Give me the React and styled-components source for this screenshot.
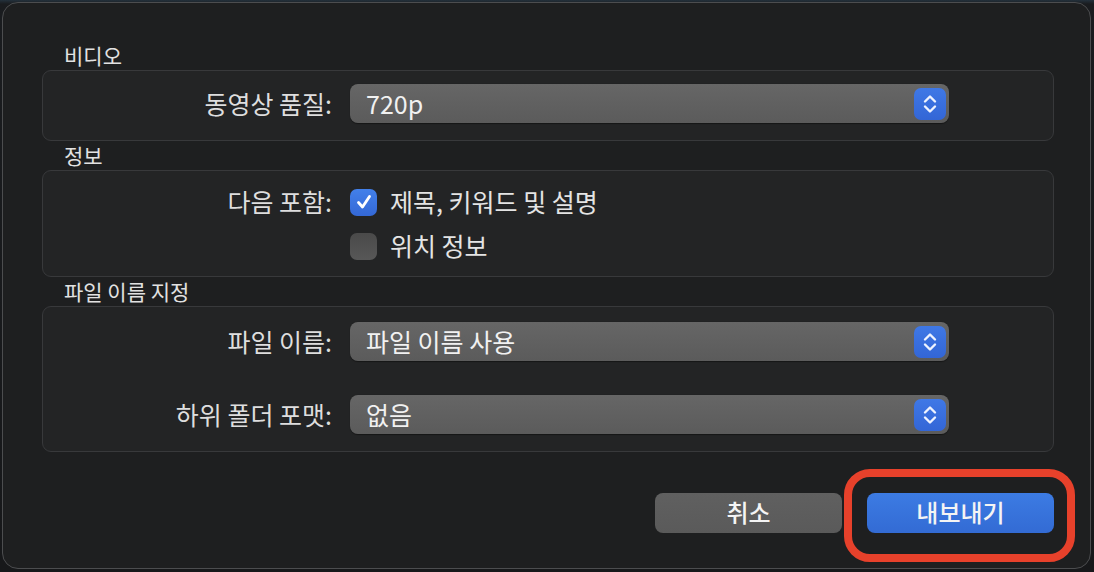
import React from "react";
import styled, { createGlobalStyle } from "styled-components";

const Global = createGlobalStyle`
  html, body { margin: 0; padding: 0; }
  body {
    width: 1094px;
    height: 572px;
    overflow: hidden;
    background: linear-gradient(180deg, #24313c 0px, #1a1c1f 4px, #17181a 100%);
    font-family: "Noto Sans CJK KR", "Noto Sans", sans-serif;
    -webkit-font-smoothing: antialiased;
  }
`;

const Window = styled.div`
  box-sizing: border-box;
  margin: 2px 0 0 2px;
  width: 1089px;
  height: 567px;
  border: 1px solid #4c4d4f;
  border-radius: 16px;
  background: #1e1f20;
  padding: 38px 0 0 39px;
  display: flex;
  flex-direction: column;
`;

const Heading = styled.div`
  height: 29px;
  line-height: 29px;
  padding-left: 22px;
  font-size: 21px;
  color: #e2e2e2;
`;

const Box = styled.div`
  box-sizing: border-box;
  width: 1012px;
  border: 1px solid #38393b;
  border-radius: 9px;
  background: #232425;
  padding: ${(p) => p.$pad};
  display: flex;
  flex-direction: column;
  gap: ${(p) => p.$gap || "0px"};
`;

const Row = styled.div`
  display: grid;
  grid-template-columns: 289px 599px;
  column-gap: 18px;
  align-items: center;
  height: ${(p) => p.$h || "39px"};
`;

const Label = styled.div`
  text-align: right;
  font-size: 25px;
  line-height: 30px;
  padding-bottom: 2px;
  color: #dedede;
  white-space: nowrap;
`;

const Popup = styled.div`
  box-sizing: border-box;
  height: 39px;
  border-radius: 8px;
  background: linear-gradient(180deg, #666666 0%, #5b5b5b 100%);
  box-shadow: 0 0.5px 1px rgba(0, 0, 0, 0.4);
  display: flex;
  align-items: center;
  justify-content: space-between;
  padding: 0 3px 0 16px;
  font-size: 25px;
  line-height: 30px;
  color: #f1f1f1;
`;

const PopupValue = styled.span`
  padding-bottom: 2px;
`;

const Stepper = styled.div`
  width: 32px;
  height: 32px;
  border-radius: 7px;
  background: linear-gradient(180deg, #3f78e6 0%, #3366d6 100%);
  display: flex;
  align-items: center;
  justify-content: center;
`;

const CheckLine = styled.div`
  display: flex;
  align-items: center;
  gap: 13px;
  font-size: 25px;
  line-height: 30px;
  color: #e4e4e4;
`;

const CheckText = styled.span`
  padding-bottom: 2px;
`;

const Check = styled.div`
  box-sizing: border-box;
  width: 27px;
  height: 27px;
  border-radius: 7px;
  background: ${(p) =>
    p.$on
      ? "linear-gradient(180deg, #4280ea 0%, #3468d6 100%)"
      : "linear-gradient(180deg, #4a4a4a 0%, #575757 100%)"};
  display: flex;
  align-items: center;
  justify-content: center;
`;

const Footer = styled.div`
  width: 1012px;
  display: flex;
  justify-content: flex-end;
  gap: 25px;
  margin-top: 41px;
`;

const Button = styled.div`
  position: relative;
  box-sizing: border-box;
  width: 187px;
  height: 40px;
  padding-bottom: 2px;
  border-radius: 8px;
  display: flex;
  align-items: center;
  justify-content: center;
  font-size: 24px;
  line-height: 30px;
  font-weight: 500;
  color: #f4f4f4;
  background: ${(p) =>
    p.$primary
      ? "linear-gradient(180deg, #3c7be3 0%, #336bd4 100%)"
      : "linear-gradient(180deg, #606060 0%, #5a5a5a 100%)"};
  ${(p) =>
    p.$highlight &&
    `
    &::after {
      content: "";
      position: absolute;
      left: -23px;
      right: -21px;
      top: -24px;
      bottom: -29px;
      border: 8px solid #e7412b;
      border-radius: 26px;
      pointer-events: none;
    }
  `}
`;

const Chevrons = () => (
  <svg width="18" height="24" viewBox="0 0 18 24" fill="none">
    <path d="M4 9.5 L9 4.5 L14 9.5" stroke="#eef3ff" strokeWidth="2.4" strokeLinecap="round" strokeLinejoin="round" />
    <path d="M4 14.5 L9 19.5 L14 14.5" stroke="#eef3ff" strokeWidth="2.4" strokeLinecap="round" strokeLinejoin="round" />
  </svg>
);

const Tick = () => (
  <svg width="20" height="20" viewBox="0 0 20 20" fill="none">
    <path d="M4.5 10.5 L8.5 15 L15.5 4.5" stroke="#ffffff" strokeWidth="2.8" strokeLinecap="round" strokeLinejoin="round" />
  </svg>
);

const PopupField = ({ value }) => (
  <Popup>
    <PopupValue>{value}</PopupValue>
    <Stepper>
      <Chevrons />
    </Stepper>
  </Popup>
);

export default function App() {
  return (
    <>
      <Global />
      <Window>
        <Heading>비디오</Heading>
        <Box $pad="13px 0 17px">
          <Row>
            <Label>동영상 품질:</Label>
            <PopupField value="720p" />
          </Row>
        </Box>

        <Heading>정보</Heading>
        <Box $pad="9px 0 8px">
          <Row $h="44px">
            <Label>다음 포함:</Label>
            <CheckLine>
              <Check $on>
                <Tick />
              </Check>
              <CheckText>제목, 키워드 및 설명</CheckText>
            </CheckLine>
          </Row>
          <Row $h="44px">
            <span />
            <CheckLine>
              <Check />
              <CheckText>위치 정보</CheckText>
            </CheckLine>
          </Row>
        </Box>

        <Heading>파일 이름 지정</Heading>
        <Box $pad="15px 0 17px" $gap="34px">
          <Row>
            <Label>파일 이름:</Label>
            <PopupField value="파일 이름 사용" />
          </Row>
          <Row>
            <Label>하위 폴더 포맷:</Label>
            <PopupField value="없음" />
          </Row>
        </Box>

        <Footer>
          <Button>취소</Button>
          <Button $primary $highlight>
            내보내기
          </Button>
        </Footer>
      </Window>
    </>
  );
}
